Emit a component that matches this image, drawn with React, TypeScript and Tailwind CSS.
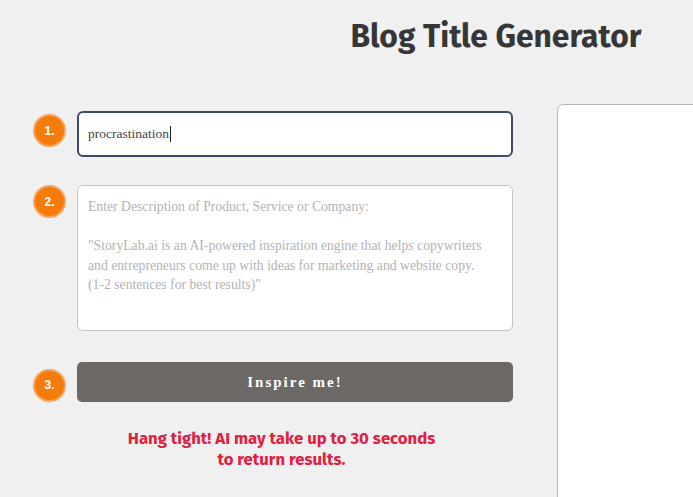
export default function App() {
  return (
    <div className="h-screen w-full overflow-hidden bg-[#f0f0f0]">
      <div className="w-[992px]">
        <h1
          className="pt-[16px] text-center text-[31.8px] font-bold leading-[40px] text-[#363636]"
          style={{ fontFamily: "'Fira Sans', Roboto, 'Open Sans', sans-serif" }}
        >
          Blog Title Generator
        </h1>

        <div className="mt-[48px] flex items-start">
          {/* Left column: steps */}
          <div className="flex w-[513px] flex-col pl-[33px] pt-[7px]">
            <div className="flex items-start gap-[11px]">
              <StepBadge n={1} className="mt-[3px]" />
              <div className="flex h-[46px] w-[436px] items-center rounded-[6px] border-2 border-[#3d4a6e] bg-white px-[9px]">
                <span
                  className="text-[13.5px] text-[#444]"
                  style={{ fontFamily: "'Liberation Serif', serif" }}
                >
                  procrastination
                </span>
                <span className="ml-px h-[16px] w-px bg-[#222]" />
              </div>
            </div>

            <div className="mt-[28px] flex items-start gap-[11px]">
              <StepBadge n={2} />
              <div
                className="h-[146px] w-[436px] rounded-[6px] border border-[#c4c4c4] bg-white px-[10px] pt-[11px] text-[13.7px] leading-[19.5px] text-[#b3b3b3]"
                style={{ fontFamily: "'Liberation Serif', serif" }}
              >
                <p className="whitespace-nowrap">Enter Description of Product, Service or Company:</p>
                <p className="mt-[19.5px] whitespace-nowrap">
                  "StoryLab.ai is an AI-powered inspiration engine that helps copywriters
                  <br />
                  and entrepreneurs come up with ideas for marketing and website copy.
                  <br />
                  (1-2 sentences for best results)"
                </p>
              </div>
            </div>

            <div className="mt-[31px] flex items-center gap-[11px]">
              <StepBadge n={3} className="mt-[6px]" />
              <button
                className="flex h-[40px] w-[436px] items-center justify-center rounded-[5px] bg-[#6b6866] text-[15px] font-bold tracking-[2px] text-white"
                style={{ fontFamily: "'Liberation Serif', serif" }}
              >
                Inspire me!
              </button>
            </div>

            <p
              className="mt-[26px] pl-[17px] text-center text-[16.7px] font-bold leading-[21px] text-[#e0203f]"
              style={{ fontFamily: "'Fira Sans', Roboto, 'Open Sans', sans-serif" }}
            >
              Hang tight! AI may take up to 30 seconds
              <br />
              to return results.
            </p>
          </div>

          {/* Right column: results panel */}
          <div className="ml-[44px] h-[420px] w-[400px] rounded-tl-[6px] border border-[#b5b5b5] bg-white" />
        </div>
      </div>
    </div>
  );
}

function StepBadge({ n, className }: { n: number; className?: string }) {
  return (
    <div
      className={`flex h-[33px] w-[33px] shrink-0 items-center justify-center rounded-full border-2 border-[#f7a35a] bg-[#f57c0b] text-[12px] font-bold text-white ${className || ""}`}
      style={{ fontFamily: "'Liberation Sans', Arial, sans-serif" }}
    >
      {n}.
    </div>
  );
}
